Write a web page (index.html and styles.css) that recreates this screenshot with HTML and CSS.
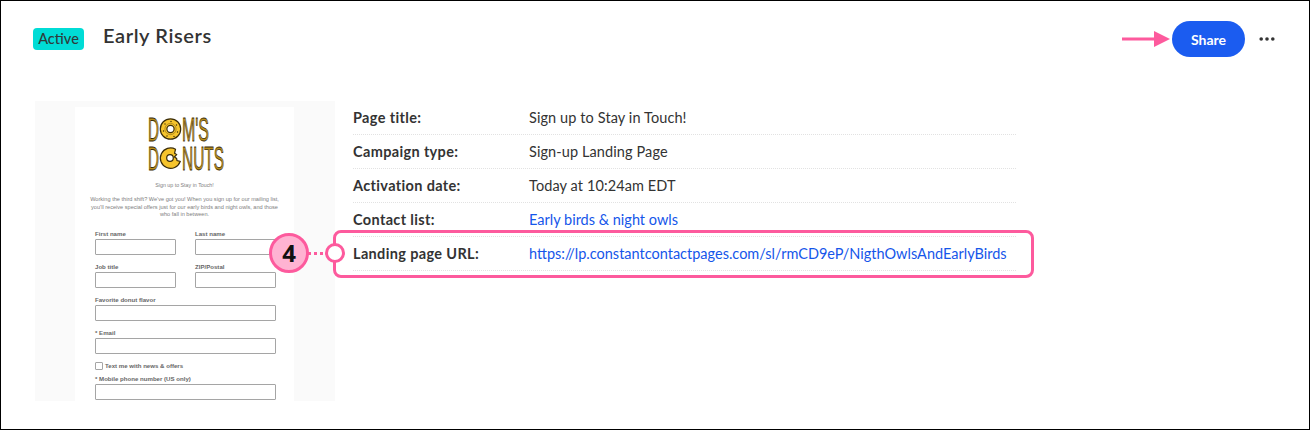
FILE: index.html
```html
<!DOCTYPE html>
<html lang="en">
<head>
<meta charset="utf-8">
<title>Early Risers</title>
<link rel="stylesheet" href="styles.css">
</head>
<body>
<main class="frame">
  <header class="top">
    <span class="badge">Active</span>
    <h1 class="title">Early Risers</h1>
    <div class="actions">
      <svg class="arrow" width="48" height="16" viewBox="0 0 48 16"><rect x="0" y="6.5" width="33" height="3" fill="#fd5a9d"/><path d="M32 0L48 8L32 16Z" fill="#fd5a9d"/></svg>
      <button class="share">Share</button>
      <svg class="more" width="16" height="4" viewBox="0 0 16 4"><circle cx="2.2" cy="2" r="1.8" fill="#333"/><circle cx="8" cy="2" r="1.8" fill="#333"/><circle cx="13.8" cy="2" r="1.8" fill="#333"/></svg>
    </div>
  </header>
  <section class="content">
    <div class="preview">
      <div class="sheet">
        <svg class="logo" width="80" height="56" viewBox="0 0 80 56">
          <text class="logo-text" x="1" y="25" textLength="11" lengthAdjust="spacingAndGlyphs">D</text>
          <circle cx="23.5" cy="13" r="10.2" fill="#f6c42c" stroke="#3a2c08" stroke-width="1.2"/>
          <circle cx="23.5" cy="13" r="3.6" fill="#fff" stroke="#3a2c08" stroke-width="1.2"/>
          <circle cx="23.5" cy="13" r="5.6" fill="none" stroke="#8a6a14" stroke-width="0.6"/>
          <g fill="#3a2c08">
            <circle cx="18" cy="8" r="0.7"/><circle cx="24" cy="5.5" r="0.7"/><circle cx="29.5" cy="9" r="0.7"/>
            <circle cx="16.5" cy="15" r="0.7"/><circle cx="30.5" cy="16" r="0.7"/><circle cx="20" cy="20" r="0.7"/><circle cx="27" cy="20.5" r="0.7"/>
          </g>
          <text class="logo-text" x="35" y="25" textLength="27" lengthAdjust="spacingAndGlyphs">M'S</text>
          <text class="logo-text" x="1" y="53.5" textLength="11" lengthAdjust="spacingAndGlyphs">D</text>
          <path d="M28.5 33.2A10.2 10.2 0 1 0 33.2 45.5L30 44.6L29.6 42.4L27.4 41L29.6 38.6L27.6 37.2Z" fill="#f6c42c" stroke="#3a2c08" stroke-width="1.2"/>
          <circle cx="23" cy="42" r="3.3" fill="#fff" stroke="#3a2c08" stroke-width="1.2"/>
          <text class="logo-text" x="35" y="53.5" textLength="42" lengthAdjust="spacingAndGlyphs">NUTS</text>
        </svg>
        <p class="form-head">Sign up to Stay in Touch!</p>
        <p class="form-intro">Working the third shift? We've got you! When you sign up for our mailing list, you'll receive special offers just for our early birds and night owls, and those who fall in between.</p>
        <form class="form">
          <div class="field"><label>First name</label><div class="input"></div></div>
          <div class="field"><label>Last name</label><div class="input"></div></div>
          <div class="field"><label>Job title</label><div class="input"></div></div>
          <div class="field"><label>ZIP/Postal</label><div class="input"></div></div>
          <div class="field wide"><label>Favorite donut flavor</label><div class="input"></div></div>
          <div class="field wide"><label>* Email</label><div class="input"></div></div>
          <div class="check wide"><span class="box"></span><label>Text me with news &amp; offers</label></div>
          <div class="field wide tight"><label>* Mobile phone number (US only)</label><div class="input"></div></div>
        </form>
      </div>
    </div>
    <dl class="details">
      <div class="row"><dt>Page title:</dt><dd>Sign up to Stay in Touch!</dd></div>
      <div class="row"><dt>Campaign type:</dt><dd>Sign-up Landing Page</dd></div>
      <div class="row"><dt>Activation date:</dt><dd>Today at 10:24am EDT</dd></div>
      <div class="row"><dt>Contact list:</dt><dd><a href="#">Early birds &amp; night owls</a></dd></div>
      <div class="row"><dt>Landing page URL:</dt><dd><a href="#">https://lp.constantcontactpages.com/sl/rmCD9eP/NigthOwlsAndEarlyBirds</a></dd></div>
    </dl>
  </section>
  <div class="highlight"></div>
  <div class="connector"></div>
  <div class="knob"></div>
  <div class="step">4</div>
</main>
</body>
</html>
```
FILE: styles.css
```css
* { box-sizing: border-box; }
html, body { margin: 0; padding: 0; background: #fff; }
body { font-family: Lato, "Open Sans", sans-serif; color: #2f2f2f; }
.frame {
  position: relative;
  width: 1310px;
  height: 430px;
  border: 1px solid #000;
  overflow: hidden;
}
.top {
  display: flex;
  align-items: flex-start;
  height: 100px;
  padding: 20px 0 0 32px;
}
.badge {
  margin-top: 7px;
  width: 51px;
  height: 22px;
  line-height: 22px;
  text-align: center;
  font-size: 14.5px;
  font-weight: 500;
  background: #00dcd6;
  border-radius: 4px;
  color: #2f3a3a;
}
.title {
  margin: -1px 0 0 19px;
  font-size: 20px;
  line-height: 30px;
  font-weight: 600;
  letter-spacing: 0.6px;
  color: #333;
}
.actions {
  display: flex;
  align-items: center;
  margin-left: auto;
  padding-right: 34px;
  height: 36px;
}
.arrow { margin-right: 2px; }
.share {
  width: 73px;
  height: 36px;
  border: 0;
  border-radius: 18px;
  background: #1b5cf0;
  color: #fff;
  font: 700 14px Lato, sans-serif;
}
.more { margin-left: 14px; }
.content { display: flex; padding-left: 34px; }
.preview {
  width: 300px;
  height: 300px;
  padding: 6px 41px 0 40px;
  background: #fafafa;
  overflow: hidden;
}
.sheet {
  height: 294px;
  background: #fff;
  font-family: "Liberation Sans", Arial, sans-serif;
  color: #808080;
  text-align: center;
  padding-top: 9px;
}
.logo { display: block; margin: 0 0 0 72px; width: 80px; height: 56px; overflow: visible; }
.logo-text {
  font-family: "Liberation Sans Narrow", "Liberation Sans", sans-serif;
  font-size: 33px;
  fill: #b98f1c;
  stroke: #3a2c08;
  stroke-width: 0.8px;
}
.form-head { margin: 9px 0 0; font-size: 5.3px; line-height: 9px; }
.form-intro { margin: 6px 0 0; padding: 0 15px; font-size: 5.6px; line-height: 7.5px; }
.form {
  display: grid;
  grid-template-columns: 81px 81px;
  column-gap: 19px;
  row-gap: 7.25px;
  padding: 10px 0 0 20px;
  text-align: left;
}
.field label, .check label {
  display: block;
  height: 10px;
  font-size: 6.1px;
  line-height: 10px;
  font-weight: 700;
  color: #666;
}
.input {
  height: 16px;
  border: 1px solid #a5a5a5;
  border-radius: 1px;
  background: #fff;
}
.wide { grid-column: 1 / 3; }
.field.wide .input { width: 181px; }
.check { display: flex; align-items: center; gap: 2px; height: 8px; }
.box { width: 8px; height: 8px; border: 1px solid #a5a5a5; border-radius: 1px; }
.tight { margin-top: -3.25px; }
.details { margin: 0 0 0 18px; width: 663px; }
.row {
  display: flex;
  align-items: center;
  height: 34px;
  border-bottom: 1px dotted #e2e2e2;
  font-size: 14.5px;
}
dt { width: 176px; font-weight: 700; letter-spacing: 0.35px; color: #333; }
dd { margin: 0; color: #333; white-space: nowrap; letter-spacing: 0.1px; }
a { color: #1556ea; text-decoration: none; letter-spacing: 0; }
.highlight {
  position: absolute;
  left: 332px;
  top: 229px;
  width: 701px;
  height: 48px;
  border: 3px solid #fd5a9d;
  border-radius: 8px;
}
.connector {
  position: absolute;
  left: 307px;
  top: 250.5px;
  width: 18px;
  height: 3px;
  background: repeating-linear-gradient(90deg, #fd5a9d 0 3px, transparent 3px 6px);
}
.knob {
  position: absolute;
  left: 324px;
  top: 242px;
  width: 20px;
  height: 20px;
  border: 3px solid #fd5a9d;
  border-radius: 50%;
  background: #fff;
}
.step {
  position: absolute;
  left: 268px;
  top: 232px;
  width: 40px;
  height: 40px;
  border: 3px solid #fd5a9d;
  border-radius: 50%;
  background: #ffb3d2;
  color: #111;
  font: 700 24px/34px "Open Sans", sans-serif;
  text-align: center;
}
```
